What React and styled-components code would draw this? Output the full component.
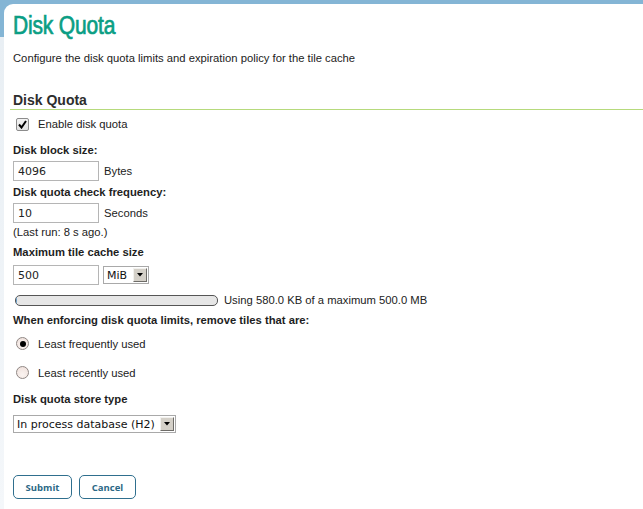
import React from "react";
import styled, { createGlobalStyle } from "styled-components";

const GlobalStyle = createGlobalStyle`
  html, body { margin: 0; padding: 0; }
  body {
    background: linear-gradient(#84b5d5 0, #84b5d5 37px, #e9eff4 37px, #f4f7fa 100%);
    font-family: "Liberation Sans", Arial, sans-serif;
    font-size: 11.25px;
    color: #222;
    min-height: 509px;
  }
`;

const Page = styled.div`
  padding: 4px 0 0 4px;
  min-height: 505px;
  display: flex;
`;

const Panel = styled.main`
  flex: 1;
  background: #fff;
  border-top-left-radius: 9px;
  padding: 0 0 0 9px;
  min-height: 505px;
`;

const Title = styled.h1`
  display: block;
  width: max-content;
  margin: 7px 0 0 0;
  font-family: "Liberation Sans", Arial, sans-serif;
  font-weight: normal;
  font-size: 25px;
  line-height: 28px;
  letter-spacing: -0.2px;
  color: #0b9e84;
  -webkit-text-stroke: 0.7px #0b9e84;
  transform: scaleX(0.84);
  transform-origin: left center;
`;

const Description = styled.p`
  margin: 12px 0 0 0;
  line-height: 14px;
`;

const SectionHeading = styled.h2`
  margin: 27px 0 0 -3px;
  padding: 0 0 1px 3px;
  font-size: 14px;
  line-height: 16px;
  font-weight: bold;
  color: #2d2d2d;
  border-bottom: 1px solid #b6da7c;
`;

const CheckRow = styled.label`
  display: flex;
  align-items: center;
  height: 28px;
  padding-left: 3px;
  gap: 9px;
`;

const CheckBox = styled.span`
  width: 11px;
  height: 11px;
  border: 1px solid #8c8c8c;
  border-radius: 2px;
  background: linear-gradient(#f4f4f4, #e2e2e2);
  display: flex;
  align-items: center;
  justify-content: center;
`;

const FieldLabel = styled.div`
  margin-top: ${(p) => p.$top}px;
  font-weight: bold;
  line-height: 14px;
  color: #1e1e1e;
`;

const Note = styled.div`
  margin-top: ${(p) => p.$top}px;
  line-height: 14px;
`;

const InputRow = styled.div`
  display: flex;
  align-items: center;
  margin-top: ${(p) => p.$top}px;
  gap: ${(p) => p.$gap || 5}px;
`;

const TextInput = styled.input`
  box-sizing: border-box;
  width: 86px;
  height: 20px;
  border: 1px solid #b5b5b5;
  padding: 0 4px;
  font-family: "DejaVu Sans", sans-serif;
  font-size: 11px;
  color: #222;
  background: #fff;
  outline: none;
`;

const SelectBox = styled.div`
  box-sizing: border-box;
  display: flex;
  align-items: center;
  justify-content: space-between;
  height: 18px;
  width: ${(p) => p.$width}px;
  border: 1px solid #a9a9a9;
  background: #fff;
  padding: 0 1px 0 3px;
  font-family: "DejaVu Sans", sans-serif;
  font-size: 11px;
  color: #111;
`;

const ArrowButton = styled.span`
  box-sizing: border-box;
  width: 14px;
  height: 14px;
  background: #d4d0c8;
  border-top: 1px solid #f2f1ee;
  border-left: 1px solid #f2f1ee;
  border-right: 1px solid #6e6c68;
  border-bottom: 1px solid #6e6c68;
  display: flex;
  align-items: center;
  justify-content: center;
`;

const ProgressRow = styled.div`
  display: flex;
  align-items: center;
  margin-top: 8px;
  height: 14px;
  gap: 6px;
  padding-left: 2px;
`;

const ProgressTrack = styled.div`
  box-sizing: border-box;
  width: 203px;
  height: 11px;
  border: 1px solid #555;
  border-radius: 5px;
  background: #e6e6e6;
  overflow: hidden;
`;

const ProgressFill = styled.div`
  height: 100%;
  background: #6b9ec7;
`;

const RadioRow = styled.label`
  display: flex;
  align-items: center;
  height: 29px;
  padding-left: 3px;
  gap: 9px;
  margin-top: ${(p) => p.$top || 0}px;
`;

const Radio = styled.span`
  box-sizing: border-box;
  width: 13px;
  height: 13px;
  border-radius: 50%;
  border: 1px solid #8f8784;
  background: radial-gradient(circle at 50% 70%, #fbf4f1, #eedfda);
  display: flex;
  align-items: center;
  justify-content: center;
  &::after {
    content: "";
    width: 6px;
    height: 6px;
    border-radius: 50%;
    background: #000;
    display: ${(p) => (p.$checked ? "block" : "none")};
  }
`;

const ButtonBar = styled.div`
  display: flex;
  gap: 7px;
  margin-top: 42px;
`;

const Button = styled.button`
  box-sizing: border-box;
  height: 24px;
  width: ${(p) => p.$width}px;
  border: 1px solid #2f6f8e;
  border-radius: 5px;
  background: #fff;
  color: #2b6886;
  font-family: "Open Sans", sans-serif;
  font-weight: bold;
  font-size: 9.5px;
  padding: 0;
  cursor: pointer;
`;

const Arrow = () => (
  <ArrowButton>
    <svg width="6" height="4" viewBox="0 0 6 4">
      <path d="M0 0 H6 L3 3.5 Z" fill="#000" />
    </svg>
  </ArrowButton>
);

export default function App() {
  const used = 580 / (500 * 1024);
  return (
    <>
      <GlobalStyle />
      <Page>
        <Panel>
          <Title>Disk Quota</Title>
          <Description>
            Configure the disk quota limits and expiration policy for the tile cache
          </Description>
          <SectionHeading>Disk Quota</SectionHeading>
          <CheckRow>
            <CheckBox>
              <svg width="9" height="9" viewBox="0 0 9 9">
                <path d="M1 4.5 L3.5 7.5 L8 1" stroke="#000" strokeWidth="2" fill="none" />
              </svg>
            </CheckBox>
            <span>Enable disk quota</span>
          </CheckRow>
          <FieldLabel $top={5}>Disk block size:</FieldLabel>
          <InputRow $top={4}>
            <TextInput defaultValue="4096" />
            <span>Bytes</span>
          </InputRow>
          <FieldLabel $top={4}>Disk quota check frequency:</FieldLabel>
          <InputRow $top={4}>
            <TextInput defaultValue="10" />
            <span>Seconds</span>
          </InputRow>
          <Note $top={2}>(Last run: 8 s ago.)</Note>
          <FieldLabel $top={6}>Maximum tile cache size</FieldLabel>
          <InputRow $top={6} $gap={4}>
            <TextInput defaultValue="500" />
            <SelectBox $width={46}>
              <span>MiB</span>
              <Arrow />
            </SelectBox>
          </InputRow>
          <ProgressRow>
            <ProgressTrack>
              <ProgressFill style={{ width: `${used * 100}%` }} />
            </ProgressTrack>
            <span>Using 580.0 KB of a maximum 500.0 MB</span>
          </ProgressRow>
          <FieldLabel $top={6}>When enforcing disk quota limits, remove tiles that are:</FieldLabel>
          <RadioRow $top={2}>
            <Radio $checked />
            <span>Least frequently used</span>
          </RadioRow>
          <RadioRow>
            <Radio />
            <span>Least recently used</span>
          </RadioRow>
          <FieldLabel $top={5}>Disk quota store type</FieldLabel>
          <InputRow $top={9}>
            <SelectBox $width={163}>
              <span>In process database (H2)</span>
              <Arrow />
            </SelectBox>
          </InputRow>
          <ButtonBar>
            <Button $width={59}>Submit</Button>
            <Button $width={57}>Cancel</Button>
          </ButtonBar>
        </Panel>
      </Page>
    </>
  );
}
